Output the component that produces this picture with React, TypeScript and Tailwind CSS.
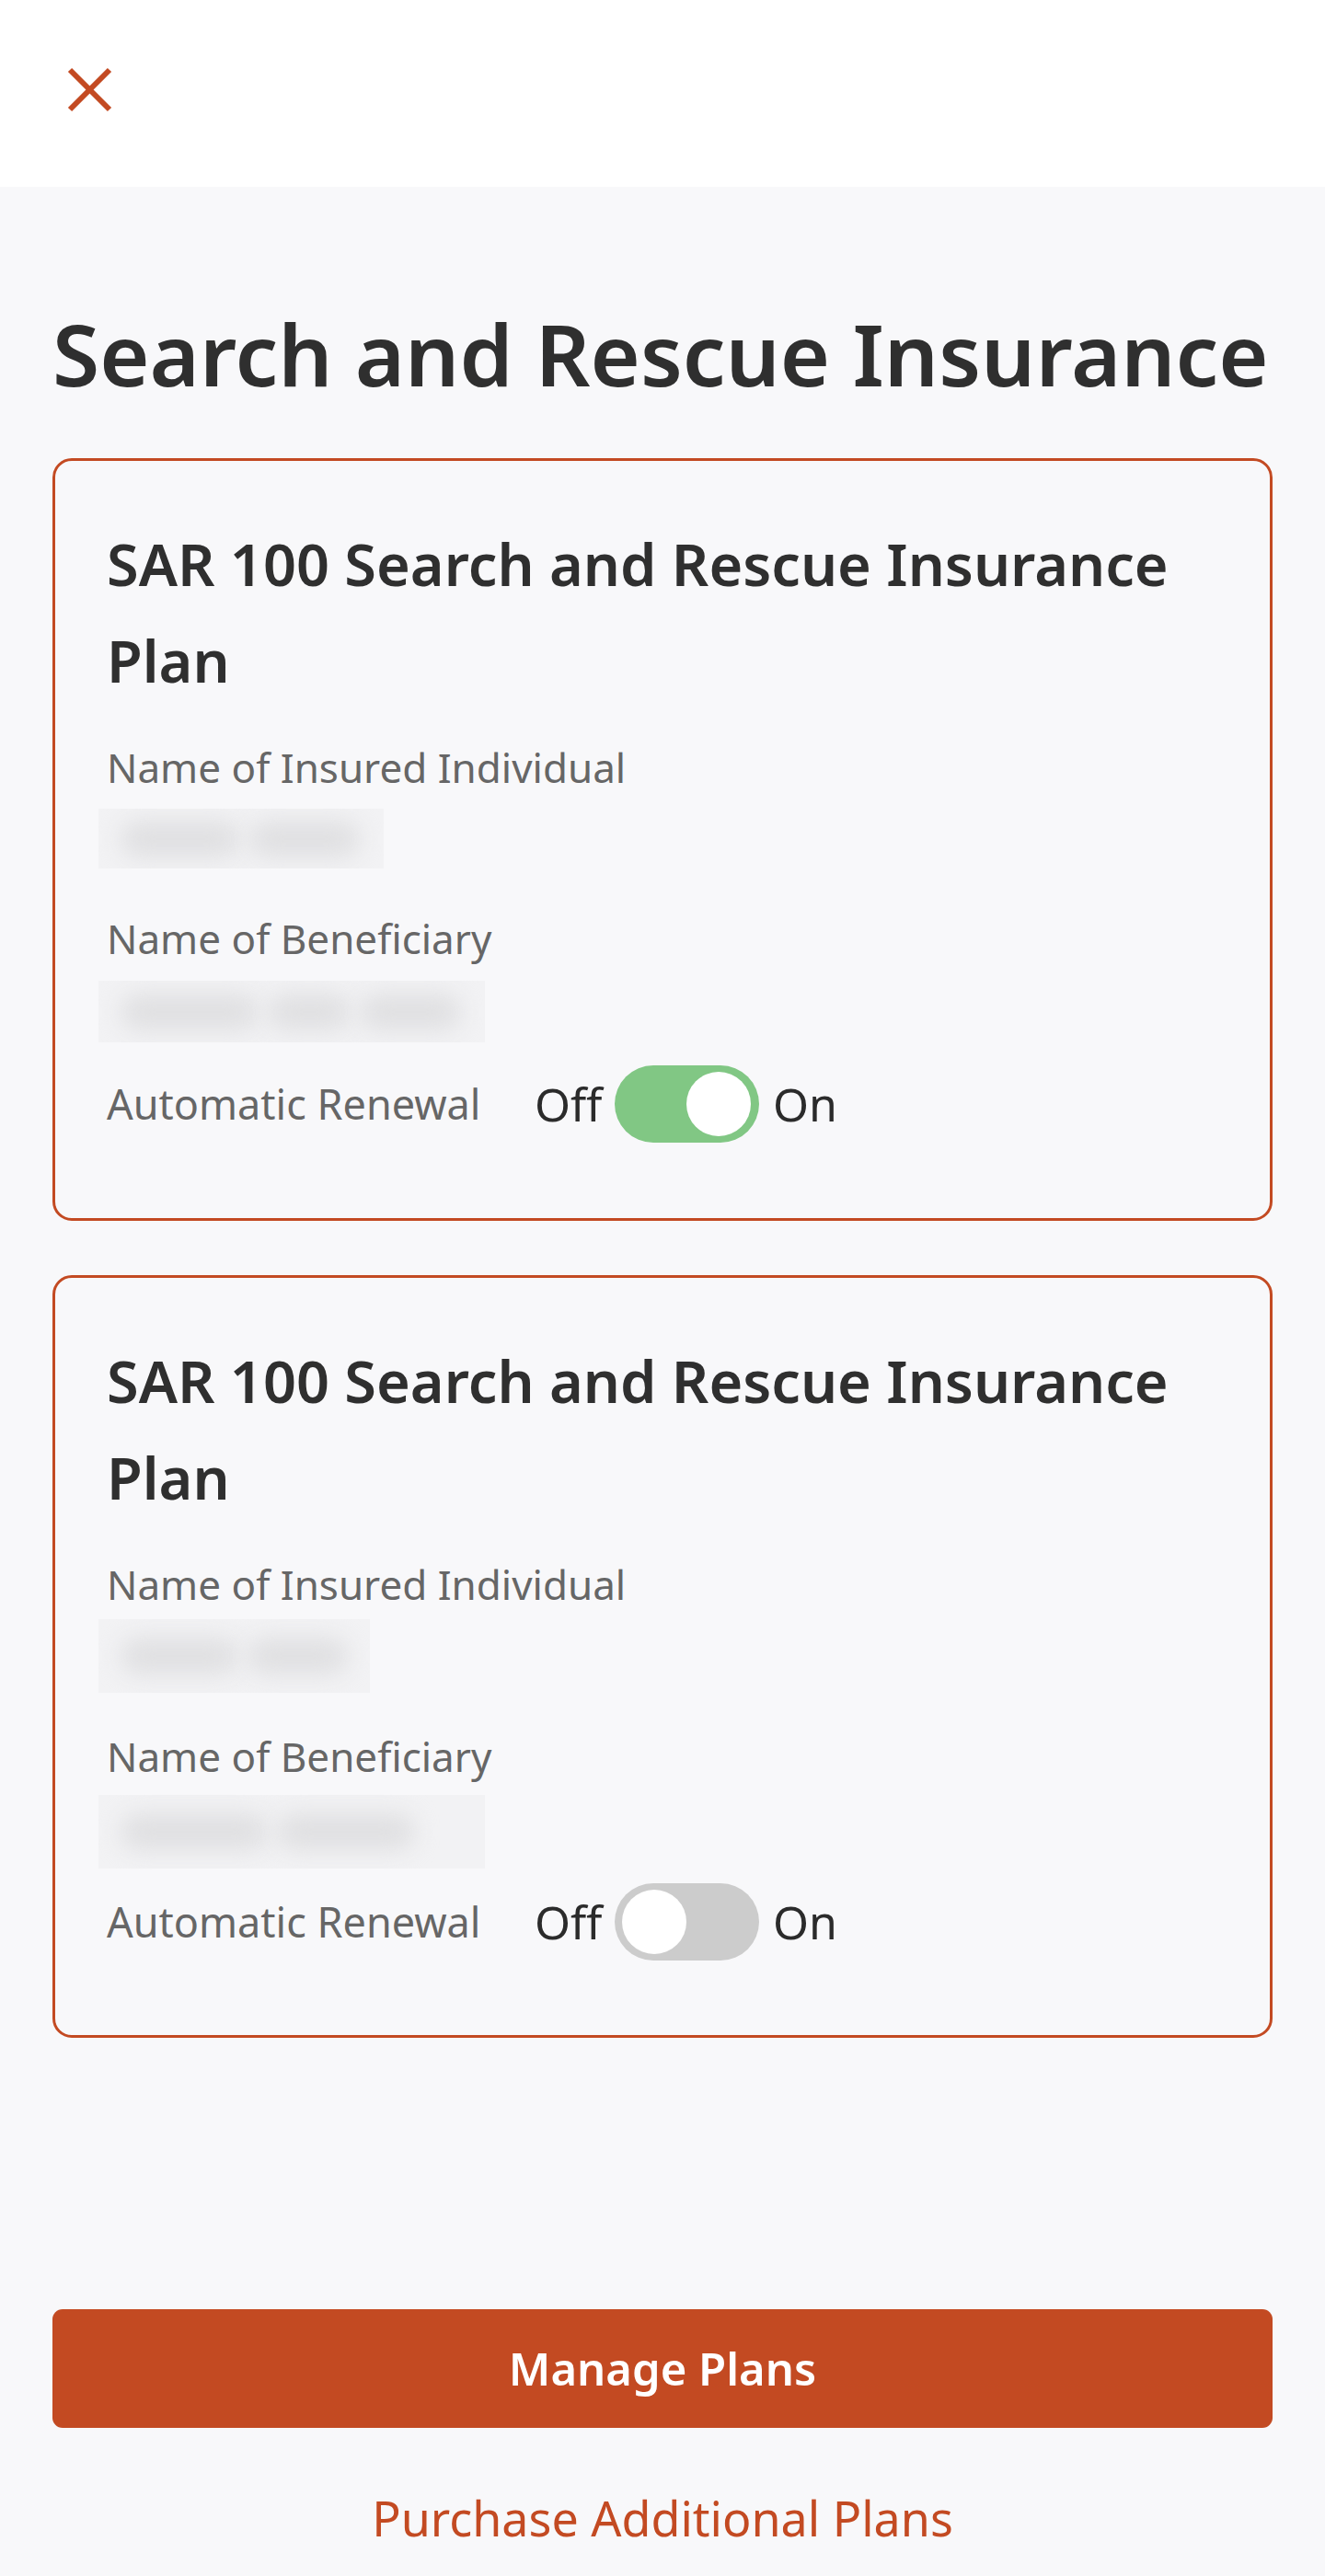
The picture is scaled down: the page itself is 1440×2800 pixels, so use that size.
import React from "react";

const ORANGE = "#c34a22";

function Toggle({ on }: { on: boolean }) {
  return (
    <div
      className={
        on
          ? "relative h-[84px] w-[157px] rounded-full bg-[#81c784]"
          : "relative h-[84px] w-[157px] rounded-full bg-[#cccccc]"
      }
    >
      <div
        className={
          on
            ? "absolute right-[9px] top-[7px] h-[70px] w-[70px] rounded-full bg-white"
            : "absolute left-[8px] top-[7px] h-[70px] w-[70px] rounded-full bg-white"
        }
      />
    </div>
  );
}

function Blur({ w, h, mt, blobs }: { w: string; h: string; mt: string; blobs: string[] }) {
  return (
    <div className={`${mt} ${h} ${w} -ml-[9px] relative overflow-hidden bg-[#f2f2f4] flex items-center gap-[10px] px-[24px]`}>
      {blobs.map((b, i) => (
        <span key={i} className={`${b} h-[40px] rounded-full bg-[#e0e0e2] blur-[12px]`} />
      ))}
    </div>
  );
}

const label = "text-[44px] leading-[60px] text-[#666666]";

function Card({ second }: { second?: boolean }) {
  return (
    <div className={second ? "rounded-[21px] border-[3px] border-[#c34a22] px-[56px] pt-[59px] pb-[81px]" : "rounded-[21px] border-[3px] border-[#c34a22] px-[56px] pt-[59px] pb-[82px]"}>
      <h2 className="text-[63px] leading-[105px] font-semibold text-[#2f2f2f]">
        SAR 100 Search and Rescue Insurance Plan
      </h2>
      <div className={`mt-[34px] ${label}`}>Name of Insured Individual</div>
      {second ? (
        <Blur w="w-[295px]" h="h-[80px]" mt="mt-[8px]" blobs={["w-[130px]", "w-[110px]"]} />
      ) : (
        <Blur w="w-[310px]" h="h-[65px]" mt="mt-[15px]" blobs={["w-[130px]", "w-[120px]"]} />
      )}
      <div className={second ? `mt-[39px] ${label}` : `mt-[46px] ${label}`}>Name of Beneficiary</div>
      {second ? (
        <Blur w="w-[420px]" h="h-[80px]" mt="mt-[12px]" blobs={["w-[160px]", "w-[150px]"]} />
      ) : (
        <Blur w="w-[420px]" h="h-[67px]" mt="mt-[16px]" blobs={["w-[150px]", "w-[90px]", "w-[110px]"]} />
      )}
      <div className={second ? "mt-[16px] flex h-[84px] items-center" : "mt-[25px] flex h-[84px] items-center"}>
        <div className="w-[465px] text-[45px] leading-[50px] text-[#666666]">Automatic Renewal</div>
        <div className="w-[87px] text-[50px] leading-[58px] text-[#2b2b2b]">Off</div>
        <Toggle on={!second} />
        <div className="ml-[15px] text-[50px] leading-[58px] text-[#2b2b2b]">On</div>
      </div>
    </div>
  );
}

export default function App() {
  return (
    <div className="min-h-[2800px] w-[1440px] bg-[#f8f8fa] font-['Noto_Sans',sans-serif]">
      <header className="h-[203px] bg-white pl-[73px] pt-[73px]">
        <svg width="49" height="49" viewBox="0 0 49 49" fill="none">
          <line x1="3" y1="3" x2="46" y2="46" stroke={ORANGE} strokeWidth="6" />
          <line x1="46" y1="3" x2="3" y2="46" stroke={ORANGE} strokeWidth="6" />
        </svg>
      </header>
      <main className="px-[57px]">
        <h1 className="mt-[116px] mb-[49px] whitespace-nowrap text-[93px] leading-[130px] font-semibold text-[#2f2f2f]">
          Search and Rescue Insurance
        </h1>
        <div className="flex flex-col gap-[59px]">
          <Card />
          <Card second />
        </div>
        <button className="mt-[295px] flex h-[129px] w-full items-center justify-center rounded-[11px] bg-[#c34a22] text-[49px] font-semibold text-white">
          Manage Plans
        </button>
        <div className="mt-[63px] text-center text-[52px] leading-[70px] text-[#c34a22]">
          Purchase Additional Plans
        </div>
      </main>
    </div>
  );
}
